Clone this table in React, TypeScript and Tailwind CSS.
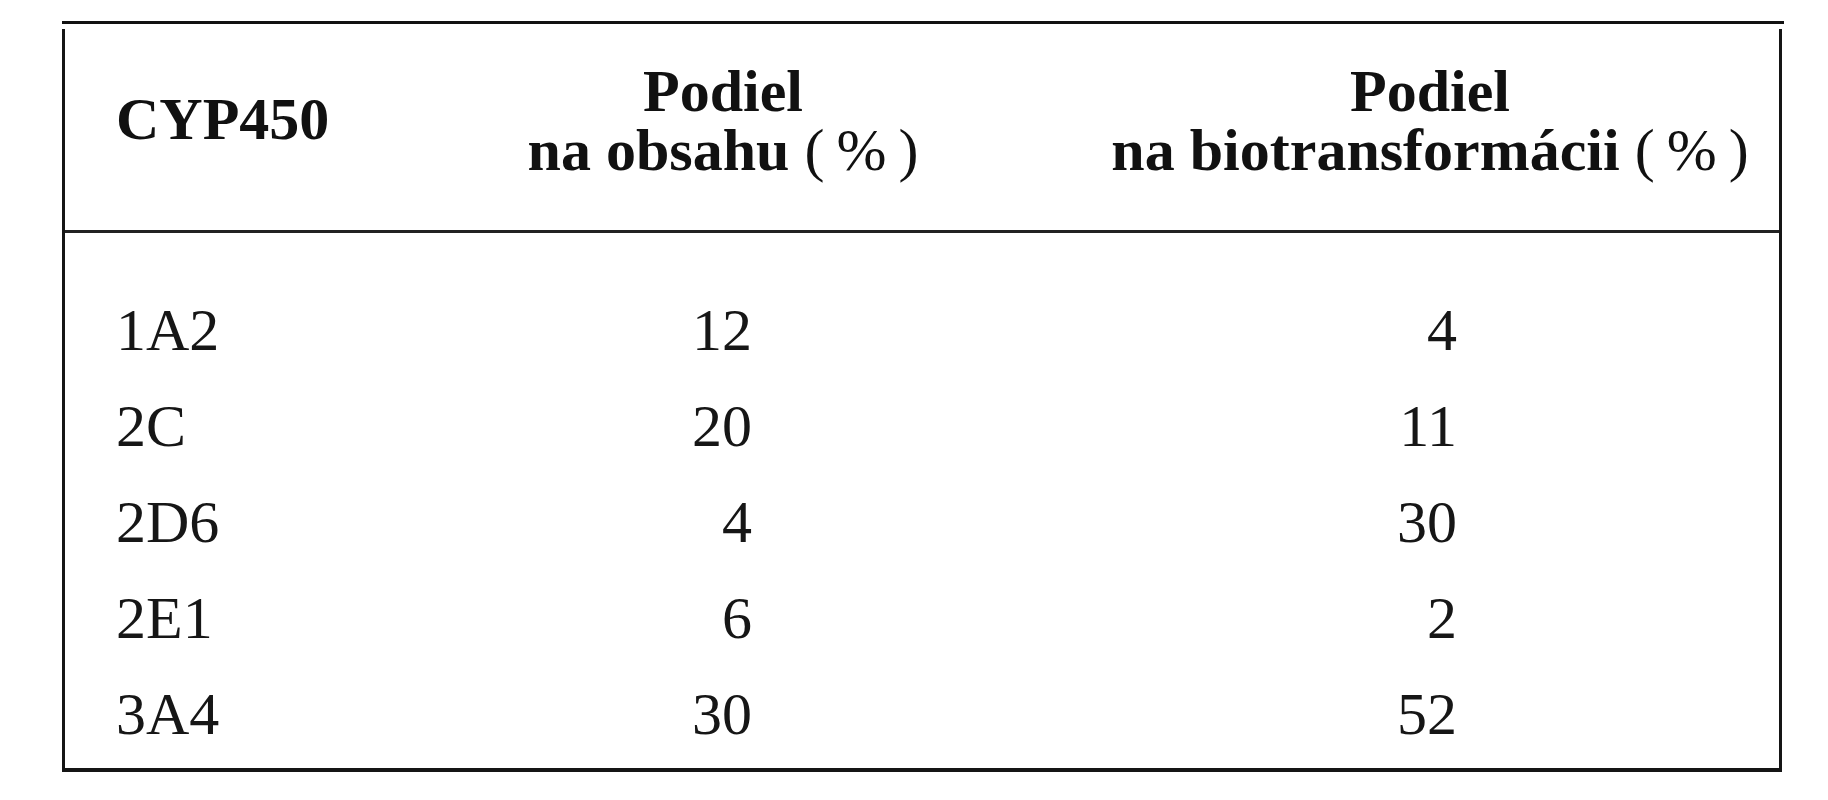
const rows = [
  { cyp: '1A2', content: '12', bio: '4' },
  { cyp: '2C', content: '20', bio: '11' },
  { cyp: '2D6', content: '4', bio: '30' },
  { cyp: '2E1', content: '6', bio: '2' },
  { cyp: '3A4', content: '30', bio: '52' },
];

export default function App() {
  return (
    <div className="w-[1828px] h-[800px] bg-white pt-[21px] pl-[62px] text-[#161616] font-['Liberation_Serif','Times_New_Roman',serif]">
      {/* top rule sits a little above the side borders */}
      <div className="w-[1722px] border-t-[3px] border-[#111]" />

      <div className="mt-[5px] w-[1720px] border-x-[3px] border-b-[4px] border-[#151515]">
        {/* Header */}
        <div className="grid grid-cols-[400px_516px_1fr] h-[204px] border-b-[3px] border-[#222] font-bold text-[60px] leading-[59px] text-[#111]">
          <div className="pl-[51px] pt-[61px]">CYP450</div>
          <div className="pt-[33px] flex flex-col items-center">
            <span>Podiel</span>
            <div className="flex whitespace-nowrap">
              <span>na obsahu&nbsp;</span>
              <span className="font-normal">(&thinsp;%&thinsp;)</span>
            </div>
          </div>
          <div className="pt-[33px] pl-[100px] flex flex-col items-center">
            <span>Podiel</span>
            <div className="flex whitespace-nowrap">
              <span>na biotransformácii&nbsp;</span>
              <span className="font-normal">(&thinsp;%&thinsp;)</span>
            </div>
          </div>
        </div>

        {/* Body */}
        <div className="pt-[49px] pb-[6px] text-[60px] leading-[96px]">
          {rows.map((r) => (
            <div key={r.cyp} className="grid grid-cols-[400px_516px_1fr]">
              <div className="pl-[51px]">{r.cyp}</div>
              <div className="pr-[229px] text-right">{r.content}</div>
              <div className="pr-[322px] text-right">{r.bio}</div>
            </div>
          ))}
        </div>
      </div>
    </div>
  );
}
